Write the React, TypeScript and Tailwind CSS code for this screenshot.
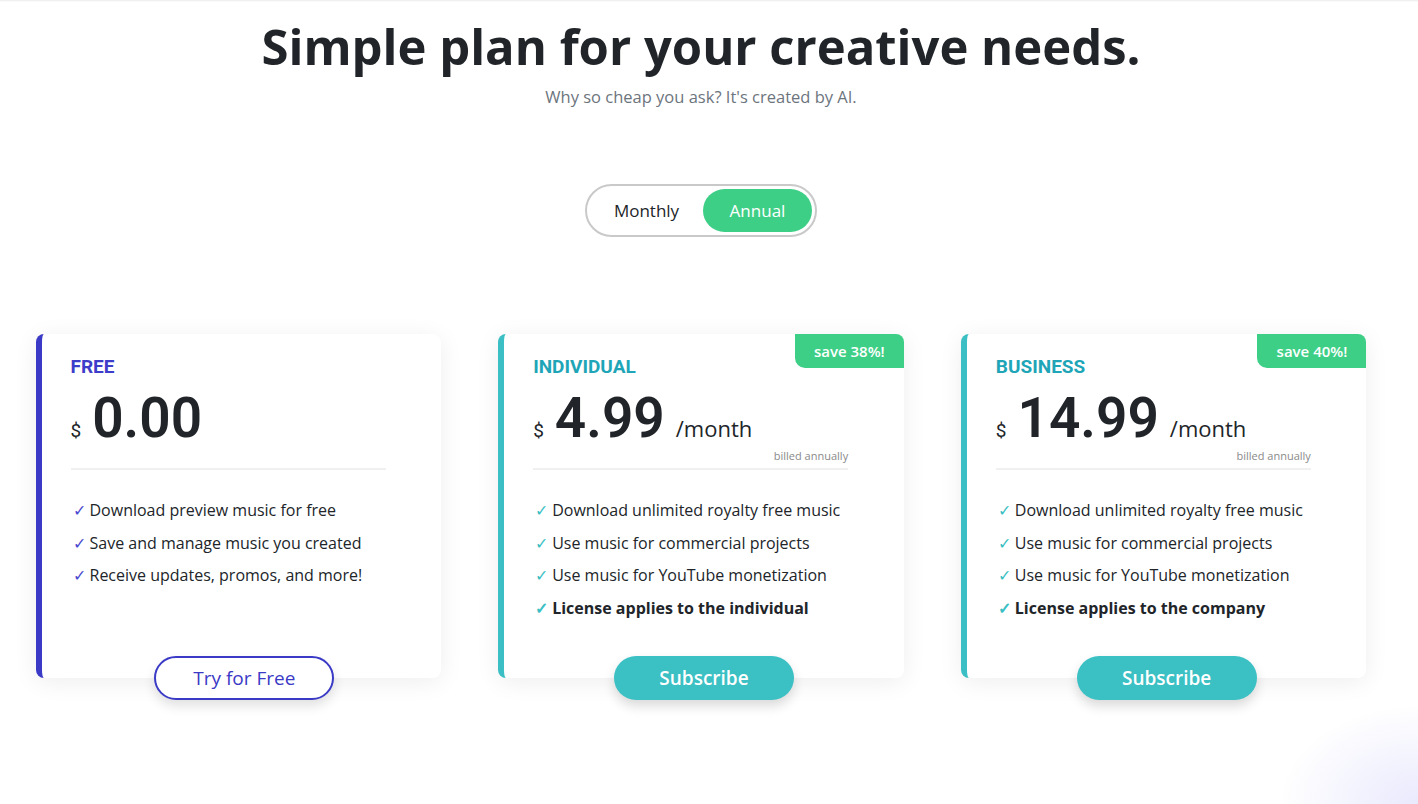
import { useState } from 'react'

interface Plan {
  id: string
  name: string
  price: string
  perMonth: boolean
  badge?: string
  features: { text: string; bold?: boolean }[]
  cta: string
  tone: 'blue' | 'teal'
}

const plans: Plan[] = [
  {
    id: 'free',
    name: 'FREE',
    price: '0.00',
    perMonth: false,
    features: [
      { text: 'Download preview music for free' },
      { text: 'Save and manage music you created' },
      { text: 'Receive updates, promos, and more!' },
    ],
    cta: 'Try for Free',
    tone: 'blue',
  },
  {
    id: 'individual',
    name: 'INDIVIDUAL',
    price: '4.99',
    perMonth: true,
    badge: 'save 38%!',
    features: [
      { text: 'Download unlimited royalty free music' },
      { text: 'Use music for commercial projects' },
      { text: 'Use music for YouTube monetization' },
      { text: 'License applies to the individual', bold: true },
    ],
    cta: 'Subscribe',
    tone: 'teal',
  },
  {
    id: 'business',
    name: 'BUSINESS',
    price: '14.99',
    perMonth: true,
    badge: 'save 40%!',
    features: [
      { text: 'Download unlimited royalty free music' },
      { text: 'Use music for commercial projects' },
      { text: 'Use music for YouTube monetization' },
      { text: 'License applies to the company', bold: true },
    ],
    cta: 'Subscribe',
    tone: 'teal',
  },
]

const body = "font-['Open_Sans',sans-serif]"
const sys = "font-['Roboto',sans-serif]"

function PlanCard({ plan }: { plan: Plan }) {
  const blue = plan.tone === 'blue'
  return (
    <div
      className={`relative h-[344px] rounded-lg bg-white border-l-[6px] shadow-[0_4px_24px_rgba(0,0,0,0.07)] ${
        blue ? 'border-[#3a3ac6]' : 'border-[#3bbfc4]'
      }`}
    >
      {plan.badge && (
        <div className={`absolute right-0 top-0 flex h-[34px] w-[109px] items-center justify-center rounded-tr-lg rounded-bl-[10px] bg-[#3ecf87] text-[15px] font-semibold text-white ${body}`}>
          {plan.badge}
        </div>
      )}
      <div className="pl-[29px] pt-[20px]">
        <h3
          className={`text-[19px] font-bold leading-[26px] ${sys} ${
            blue ? 'text-[#3d3dc9]' : 'text-[#1ea5b7]'
          }`}
        >
          {plan.name}
        </h3>
        <div className="w-[315px]">
          <div className={`mt-[8px] flex items-baseline text-[#212529] ${sys}`}>
            <span className="mr-[11px] text-[19px]">$</span>
            <span className="text-[55px] font-semibold leading-[60px]">{plan.price}</span>
            {plan.perMonth && (
              <span className={`ml-[11px] text-[22px] ${body}`}>/month</span>
            )}
          </div>
          <div className={`h-[16px] text-right text-[11px] leading-[16px] text-[#8a8a8a] ${body}`}>
            {plan.perMonth ? 'billed annually' : ''}
          </div>
          <div className="mt-[4px] h-[2px] bg-[#f0f0f0]" />
        </div>
        <ul className={`mt-[24px] flex flex-col text-[16px] text-[#212529] ${body}`}>
          {plan.features.map((f) => (
            <li key={f.text} className={`flex h-[32.5px] items-center ${f.bold ? 'font-bold' : ''}`}>
              <span className={`mr-[4px] ml-[2px] ${blue ? 'text-[#4a4ad0]' : 'text-[#3bbfc4]'}`}>✓</span>
              {f.text}
            </li>
          ))}
        </ul>
      </div>
      <div className="absolute bottom-0 left-0 right-0 flex translate-y-1/2 justify-center">
        {blue ? (
          <button className={`ml-[6px] h-[44px] w-[180px] rounded-full border-2 border-[#3a3ac6] bg-white text-[19px] text-[#3a3ac6] shadow-[0_6px_12px_rgba(0,0,0,0.12)] ${body}`}>
            {plan.cta}
          </button>
        ) : (
          <button className={`h-[44px] w-[180px] rounded-full bg-[#3bc0c4] text-[19px] font-semibold text-white shadow-[0_6px_12px_rgba(0,0,0,0.15)] ${body}`}>
            {plan.cta}
          </button>
        )}
      </div>
    </div>
  )
}

export default function App() {
  const [annual, setAnnual] = useState(true)

  return (
    <div className="relative min-h-[804px] overflow-hidden bg-white">
      <div className="h-[2px] bg-gradient-to-b from-[#ececec] to-white" />
      <div className="w-[1402px]">
        <div className="flex flex-col items-center">
          <h1 className={`mt-[14px] text-[49px] font-bold leading-[60px] text-[#212529] ${body}`}>
            Simple plan for your creative needs.
          </h1>
          <p className={`mt-[9px] text-[16.5px] text-[#6c757d] ${body}`}>
            Why so cheap you ask? It's created by AI.
          </p>
          <div className={`mt-[74px] flex h-[53px] items-center rounded-full border-2 border-[#c9c9c9] p-[3px] text-[17px] ${body}`}>
            <button
              onClick={() => setAnnual(false)}
              className={`h-[43px] w-[113px] rounded-full ${!annual ? 'bg-[#3ecf87] text-white' : 'text-[#212529]'}`}
            >
              Monthly
            </button>
            <button
              onClick={() => setAnnual(true)}
              className={`h-[43px] w-[109px] rounded-full ${annual ? 'bg-[#3ecf87] text-white' : 'text-[#212529]'}`}
            >
              Annual
            </button>
          </div>
        </div>
        <div className="mx-auto mt-[97px] grid w-[1331px] grid-cols-3 gap-[57px]">
          {plans.map((p) => (
            <PlanCard key={p.id} plan={p} />
          ))}
        </div>
      </div>
      <div className="pointer-events-none absolute bottom-0 right-0 h-[100px] w-[140px] bg-[radial-gradient(ellipse_at_100%_100%,rgba(99,102,241,0.14),transparent_70%)]" />
    </div>
  )
}
